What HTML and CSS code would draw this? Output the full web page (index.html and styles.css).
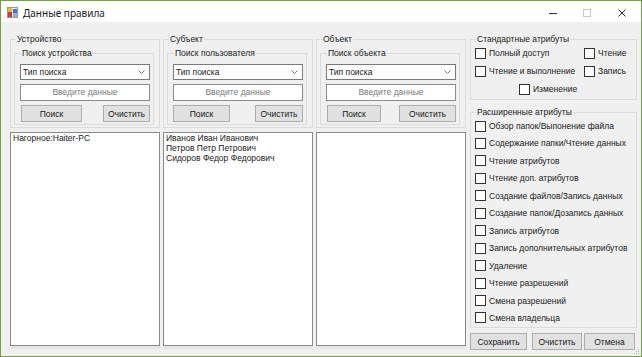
FILE: index.html
```html
<!DOCTYPE html>
<html lang="ru">
<head>
    <meta charset="UTF-8">
    <title>Данные правила</title>
    <link rel="stylesheet" href="styles.css">
</head>
<body>

<div class="window">
    <!-- Title bar -->
    <div class="titlebar">
        <svg class="app-icon" width="11" height="11" viewBox="0 0 11 11">
            <rect x="0.5" y="0.5" width="10" height="10" fill="#e8e8e8" stroke="#9a9a9a"/>
            <rect x="1" y="1" width="4" height="4" fill="#f2b632"/>
            <rect x="1" y="5" width="4" height="5" fill="#d9352b"/>
            <rect x="6" y="2" width="4" height="4" fill="#3b78d8"/>
            <rect x="6" y="6" width="4" height="4" fill="#8ab4f0"/>
        </svg>
        <span class="title">Данные правила</span>
        <div class="caption-buttons">
            <span class="cap">
                <svg width="10" height="10" viewBox="0 0 10 10"><line x1="1" y1="5.5" x2="9" y2="5.5" stroke="#333" stroke-width="1"/></svg>
            </span>
            <span class="cap">
                <svg width="10" height="10" viewBox="0 0 10 10"><rect x="1.5" y="1.5" width="7" height="7" fill="none" stroke="#c8c8c8"/></svg>
            </span>
            <span class="cap">
                <svg width="10" height="10" viewBox="0 0 10 10"><path d="M1.5 1.5 L8.5 8.5 M8.5 1.5 L1.5 8.5" stroke="#333" stroke-width="1"/></svg>
            </span>
        </div>
    </div>

    <div class="client">

        <!-- Device column -->
        <div class="column device">
            <fieldset class="group">
                <legend>Устройство</legend>
                <fieldset class="group inner">
                    <legend>Поиск устройства</legend>
                    <div class="combo">
                        <span>Тип поиска</span>
                        <svg width="7" height="4" viewBox="0 0 7 4"><path d="M0.5 0.5 L3.5 3.5 L6.5 0.5" fill="none" stroke="#7a7a7a"/></svg>
                    </div>
                    <div class="input">Введите данные</div>
                    <div class="buttons">
                        <button class="btn find">Поиск</button>
                        <button class="btn clear">Очистить</button>
                    </div>
                </fieldset>
            </fieldset>
            <div class="listbox">
                <div>Нагорное:Haiter-PC</div>
            </div>
        </div>

        <!-- Subject column -->
        <div class="column subject">
            <fieldset class="group">
                <legend>Субъект</legend>
                <fieldset class="group inner">
                    <legend>Поиск пользователя</legend>
                    <div class="combo">
                        <span>Тип поиска</span>
                        <svg width="7" height="4" viewBox="0 0 7 4"><path d="M0.5 0.5 L3.5 3.5 L6.5 0.5" fill="none" stroke="#7a7a7a"/></svg>
                    </div>
                    <div class="input">Введите данные</div>
                    <div class="buttons">
                        <button class="btn find">Поиск</button>
                        <button class="btn clear">Очистить</button>
                    </div>
                </fieldset>
            </fieldset>
            <div class="listbox">
                <div>Иванов Иван Иванович</div>
                <div>Петров Петр Петрович</div>
                <div>Сидоров Федор Федорович</div>
            </div>
        </div>

        <!-- Object column -->
        <div class="column object">
            <fieldset class="group">
                <legend>Объект</legend>
                <fieldset class="group inner">
                    <legend>Поиск объекта</legend>
                    <div class="combo">
                        <span>Тип поиска</span>
                        <svg width="7" height="4" viewBox="0 0 7 4"><path d="M0.5 0.5 L3.5 3.5 L6.5 0.5" fill="none" stroke="#7a7a7a"/></svg>
                    </div>
                    <div class="input">Введите данные</div>
                    <div class="buttons">
                        <button class="btn find">Поиск</button>
                        <button class="btn clear">Очистить</button>
                    </div>
                </fieldset>
            </fieldset>
            <div class="listbox"></div>
        </div>

        <!-- Attributes -->
        <div class="attrs">
            <fieldset class="group std">
                <legend>Стандартные атрибуты</legend>
                <div class="std-grid">
                    <label class="check"><span class="box"></span>Полный доступ</label>
                    <label class="check"><span class="box"></span>Чтение</label>
                    <label class="check"><span class="box"></span>Чтение и выполнение</label>
                    <label class="check"><span class="box"></span>Запись</label>
                    <label class="check wide"><span class="box"></span>Изменение</label>
                </div>
            </fieldset>

            <fieldset class="group ext">
                <legend>Расширенные атрибуты</legend>
                <div class="ext-list">
                    <label class="check"><span class="box"></span>Обзор папок/Выпонение файла</label>
                    <label class="check"><span class="box"></span>Содержание папки/Чтение данных</label>
                    <label class="check"><span class="box"></span>Чтение атрибутов</label>
                    <label class="check"><span class="box"></span>Чтение доп. атрибутов</label>
                    <label class="check"><span class="box"></span>Создание файлов/Запись данных</label>
                    <label class="check"><span class="box"></span>Создание папок/Дозапись данных</label>
                    <label class="check"><span class="box"></span>Запись атрибутов</label>
                    <label class="check"><span class="box"></span>Запись дополнительных атрибутов</label>
                    <label class="check"><span class="box"></span>Удаление</label>
                    <label class="check"><span class="box"></span>Чтение разрешений</label>
                    <label class="check"><span class="box"></span>Смена разрешений</label>
                    <label class="check"><span class="box"></span>Смена владельца</label>
                </div>
            </fieldset>

            <div class="actions">
                <button class="btn save">Сохранить</button>
                <button class="btn reset">Очистить</button>
                <button class="btn cancel">Отмена</button>
            </div>
        </div>

        <svg class="grip" width="6" height="6" viewBox="0 0 6 6">
            <rect x="4" y="0" width="1" height="1" fill="#b8b8b8"/>
            <rect x="2" y="2" width="1" height="1" fill="#b8b8b8"/>
            <rect x="4" y="2" width="1" height="1" fill="#b8b8b8"/>
            <rect x="0" y="4" width="1" height="1" fill="#b8b8b8"/>
            <rect x="2" y="4" width="1" height="1" fill="#b8b8b8"/>
            <rect x="4" y="4" width="1" height="1" fill="#b8b8b8"/>
        </svg>
    </div>
</div>

</body>
</html>
```

FILE: styles.css
```css
/* General styles */
body {
    margin: 0;
    padding: 0;
    background-color: #ffffff;
    font-family: 'Liberation Sans', Arial, sans-serif;
    font-size: 8.5px;
    color: #1a1a1a;
}

.window {
    width: 642px;
    height: 357px;
    box-sizing: border-box;
    border: 1px solid #6fa53c;
    display: flex;
    flex-direction: column;
    background-color: #f0f0f0;
}

/* Title bar */
.titlebar {
    height: 21px;
    flex: none;
    background-color: #ffffff;
    display: flex;
    align-items: center;
    padding-left: 6px;
}

.app-icon {
    margin-top: 1px;
}

.title {
    font-family: 'Noto Sans', 'Liberation Sans', sans-serif;
    font-size: 10px;
    margin-left: 5px;
    margin-top: 2px;
}

.caption-buttons {
    margin-left: auto;
    display: flex;
    padding-right: 2px;
    margin-top: 3px;
}

.cap {
    width: 34.5px;
    height: 18px;
    display: flex;
    align-items: center;
    justify-content: center;
}

/* Client area */
.client {
    flex: 1;
    display: flex;
    padding: 11px 4px 6px 9px;
    position: relative;
    min-height: 0;
}

.column {
    width: 150px;
    display: flex;
    flex-direction: column;
    margin-right: 3px;
}

.column.object {
    margin-right: 4px;
}

/* Group boxes */
.group {
    margin: 0;
    padding: 0 0 2px 0;
    min-width: 0;
    border: 1px solid #dcdcdc;
}

.group legend {
    padding: 0 1px;
    margin-left: 5px;
    line-height: 12px;
    font-size: 8.5px;
}

.group.inner {
    margin: 2px 5px 0 3px;
    padding: 5px 3px 2px 5px;
}

.inner legend {
    margin-left: 1px;
}

.combo {
    height: 16px;
    box-sizing: border-box;
    border: 1px solid #7a7a7a;
    background-color: #ffffff;
    display: flex;
    align-items: center;
    justify-content: space-between;
    padding: 0 4px 0 2px;
}

.input {
    height: 17px;
    box-sizing: border-box;
    margin-top: 4px;
    border: 1px solid #8c8c8c;
    background-color: #ffffff;
    color: #7a7a7a;
    text-align: center;
    line-height: 15px;
}

.buttons {
    margin-top: 4px;
    display: flex;
    justify-content: space-between;
}

.btn {
    height: 17px;
    padding: 0;
    border: 1px solid #adadad;
    background-color: #e1e1e1;
    font-family: 'Liberation Sans', Arial, sans-serif;
    font-size: 8.5px;
    color: #1a1a1a;
}

.device .find { width: 61px; margin-left: 1px; }
.device .clear { width: 47px; }
.subject .find { width: 57px; }
.subject .clear { width: 48px; }
.object .find { width: 54px; margin-left: 1px; }
.object .clear { width: 57px; }

/* List boxes */
.listbox {
    flex: 1;
    margin-top: 4px;
    margin-bottom: 4px;
    background-color: #ffffff;
    border: 1px solid #8a8a8a;
    padding: 0 2px;
    line-height: 10px;
    box-shadow: 0 3px 0 #e6e6e6;
}

/* Attributes */
.attrs {
    width: 167px;
    display: flex;
    flex-direction: column;
}

.check {
    display: flex;
    align-items: center;
    height: 12px;
    white-space: nowrap;
}

.box {
    width: 11px;
    height: 11px;
    box-sizing: border-box;
    border: 1px solid #333333;
    background-color: #ffffff;
    margin-right: 3px;
    flex: none;
}

.std {
    padding: 2px 0 4px 4px;
}

.std legend,
.ext legend {
    margin-left: 1px;
}

.std-grid {
    display: grid;
    grid-template-columns: 109px auto;
    row-gap: 6px;
}

.check.wide {
    grid-column: 1 / 3;
    padding-left: 44px;
}

.ext {
    flex: 1;
    margin-top: 6px;
    padding: 2px 0 3px 4px;
    display: flex;
    flex-direction: column;
}

.ext-list {
    flex: 1;
    display: flex;
    flex-direction: column;
    justify-content: space-between;
}

.actions {
    margin-top: 5px;
    display: flex;
}

.save { width: 57px; }
.reset { width: 50px; margin-left: 5px; }
.cancel { width: 51px; margin-left: 2px; }

/* resize grip in the corner */
.grip {
    position: absolute;
    right: 1px;
    bottom: 1px;
}
```
